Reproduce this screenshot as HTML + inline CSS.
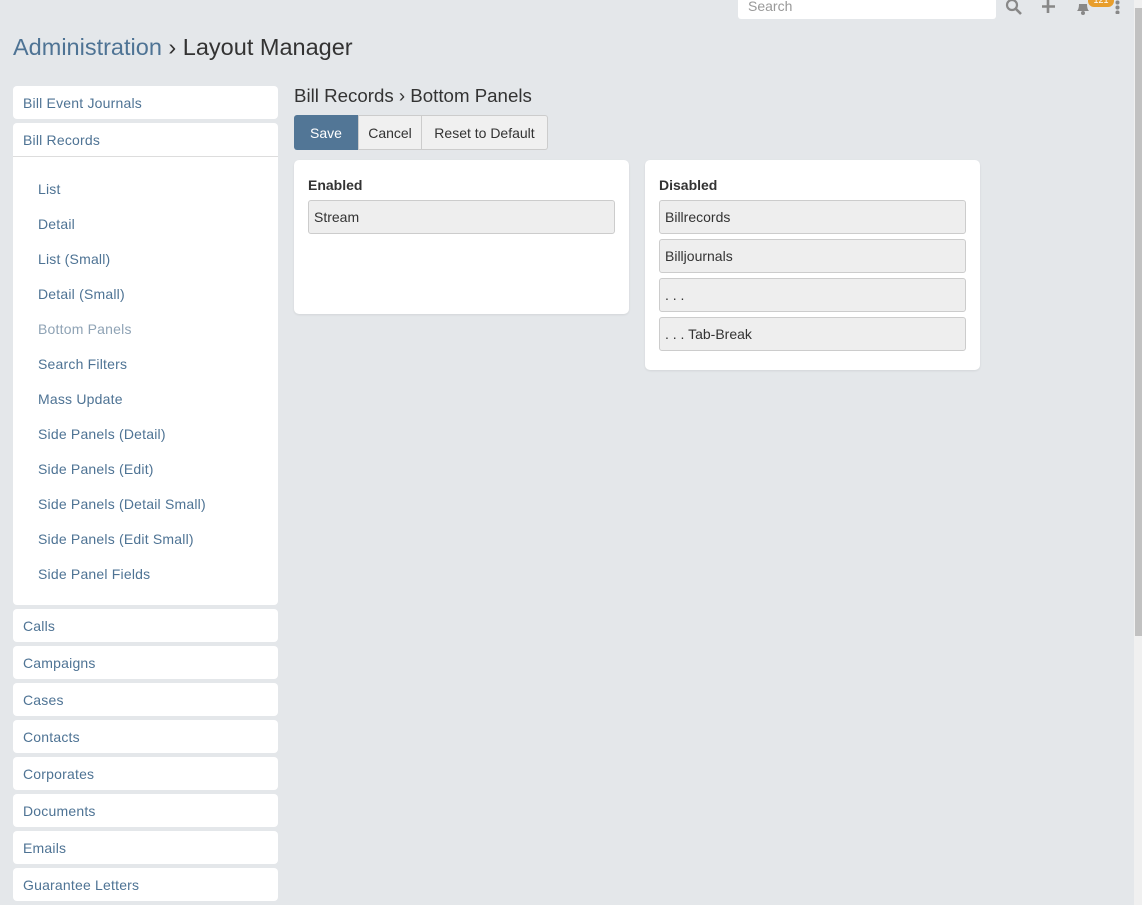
<!DOCTYPE html><html><head><style>
*{box-sizing:border-box;margin:0;padding:0}
body{width:1142px;height:905px;overflow:hidden;background:#e4e7ea;font-family:"Liberation Sans",sans-serif;font-size:14px;color:#333;position:relative}
.abs{position:absolute}
.link{color:#4e7394}
.box{background:#fff;border-radius:4px;position:absolute;left:13px;width:265px}
.si{position:absolute;left:25px;color:#4e7394;letter-spacing:0.2px}
.pnl{position:absolute;background:#fff;border-radius:5px;box-shadow:0 1px 2px rgba(0,0,0,.08)}
.it{position:absolute;left:14px;width:307px;height:34px;background:#eee;border:1px solid #ccc;border-radius:3px;padding:8px 5px;color:#333}
</style></head><body>
<div class="abs" style="left:738px;top:-10px;width:258px;height:29px;background:#fff;border-radius:3px;color:#999;padding:8px 10px;font-size:14px">Search</div>
<svg class="abs" style="left:1005px;top:0" width="18" height="16"><circle cx="7" cy="5" r="5" fill="none" stroke="#888" stroke-width="2.2"/><path d="M11 9l5 5" stroke="#888" stroke-width="2.6"/></svg>
<svg class="abs" style="left:1041px;top:0" width="16" height="16"><path d="M7 0v13M1 6.5h13" stroke="#888" stroke-width="2.6"/></svg>
<svg class="abs" style="left:1075px;top:0" width="16" height="16"><path d="M2 11q2-2 2-7h8q0 5 2 7z" fill="#888"/><circle cx="8" cy="13" r="2" fill="#888"/></svg>
<div class="abs" style="left:1088px;top:-6px;width:26px;height:13px;background:#e89e2c;border-radius:6px;color:#fff;font-size:9px;text-align:center;line-height:12px">121</div>
<div class="abs" style="left:1115px;top:0;width:5px;height:14px;background:radial-gradient(circle,#888 2px,transparent 2.2px) 0 0/5px 5px"></div>
<div class="abs" style="left:1134px;top:0;width:8px;height:905px;background:#f0f0f0"></div>
<div class="abs" style="left:1135px;top:8px;width:7px;height:628px;background:#c1c1c1"></div>
<div class="abs" style="left:13px;top:34px;font-size:23.5px"><span class="link">Administration</span> › Layout Manager</div>
<div class="box" style="top:86px;height:33px"><span class="si" style="left:10px;top:9px">Bill Event Journals</span></div>
<div class="box" style="top:123px;height:482px"><span class="si" style="left:10px;top:9px">Bill Records</span><div class="abs" style="left:0;top:33px;width:265px;border-top:1px solid #ddd"></div>
<span class="si" style="top:58px">List</span><span class="si" style="top:93px">Detail</span><span class="si" style="top:128px">List (Small)</span><span class="si" style="top:163px">Detail (Small)</span><span class="si" style="top:198px;color:#8fa3b5">Bottom Panels</span><span class="si" style="top:233px">Search Filters</span><span class="si" style="top:268px">Mass Update</span><span class="si" style="top:303px">Side Panels (Detail)</span><span class="si" style="top:338px">Side Panels (Edit)</span><span class="si" style="top:373px">Side Panels (Detail Small)</span><span class="si" style="top:408px">Side Panels (Edit Small)</span><span class="si" style="top:443px">Side Panel Fields</span></div>
<div class="box" style="top:609px;height:33px"><span class="si" style="left:10px;top:9px">Calls</span></div>
<div class="box" style="top:646px;height:33px"><span class="si" style="left:10px;top:9px">Campaigns</span></div>
<div class="box" style="top:683px;height:33px"><span class="si" style="left:10px;top:9px">Cases</span></div>
<div class="box" style="top:720px;height:33px"><span class="si" style="left:10px;top:9px">Contacts</span></div>
<div class="box" style="top:757px;height:33px"><span class="si" style="left:10px;top:9px">Corporates</span></div>
<div class="box" style="top:794px;height:33px"><span class="si" style="left:10px;top:9px">Documents</span></div>
<div class="box" style="top:831px;height:33px"><span class="si" style="left:10px;top:9px">Emails</span></div>
<div class="box" style="top:868px;height:33px"><span class="si" style="left:10px;top:9px">Guarantee Letters</span></div>
<div class="abs" style="left:294px;top:85px;font-size:18.7px">Bill Records › Bottom Panels</div>
<div class="abs" style="left:294px;top:115px;height:35px;display:flex;font-size:14px">
<div style="width:64px;background:#527696;color:#fff;border-radius:3px 0 0 3px;text-align:center;line-height:36px">Save</div>
<div style="width:64px;background:#f0f0f0;border:1px solid #ccc;text-align:center;line-height:34px">Cancel</div>
<div style="width:126px;background:#f0f0f0;border:1px solid #ccc;border-left:0;border-radius:0 3px 3px 0;text-align:center;line-height:34px">Reset to Default</div></div>
<div class="pnl" style="left:294px;top:160px;width:335px;height:154px"><b class="abs" style="left:14px;top:17px">Enabled</b><div class="it" style="top:40px">Stream</div></div>
<div class="pnl" style="left:645px;top:160px;width:335px;height:210px"><b class="abs" style="left:14px;top:17px">Disabled</b>
<div class="it" style="top:40px">Billrecords</div><div class="it" style="top:79px">Billjournals</div><div class="it" style="top:118px">. . .</div><div class="it" style="top:157px">. . . Tab-Break</div></div>
</body></html>
